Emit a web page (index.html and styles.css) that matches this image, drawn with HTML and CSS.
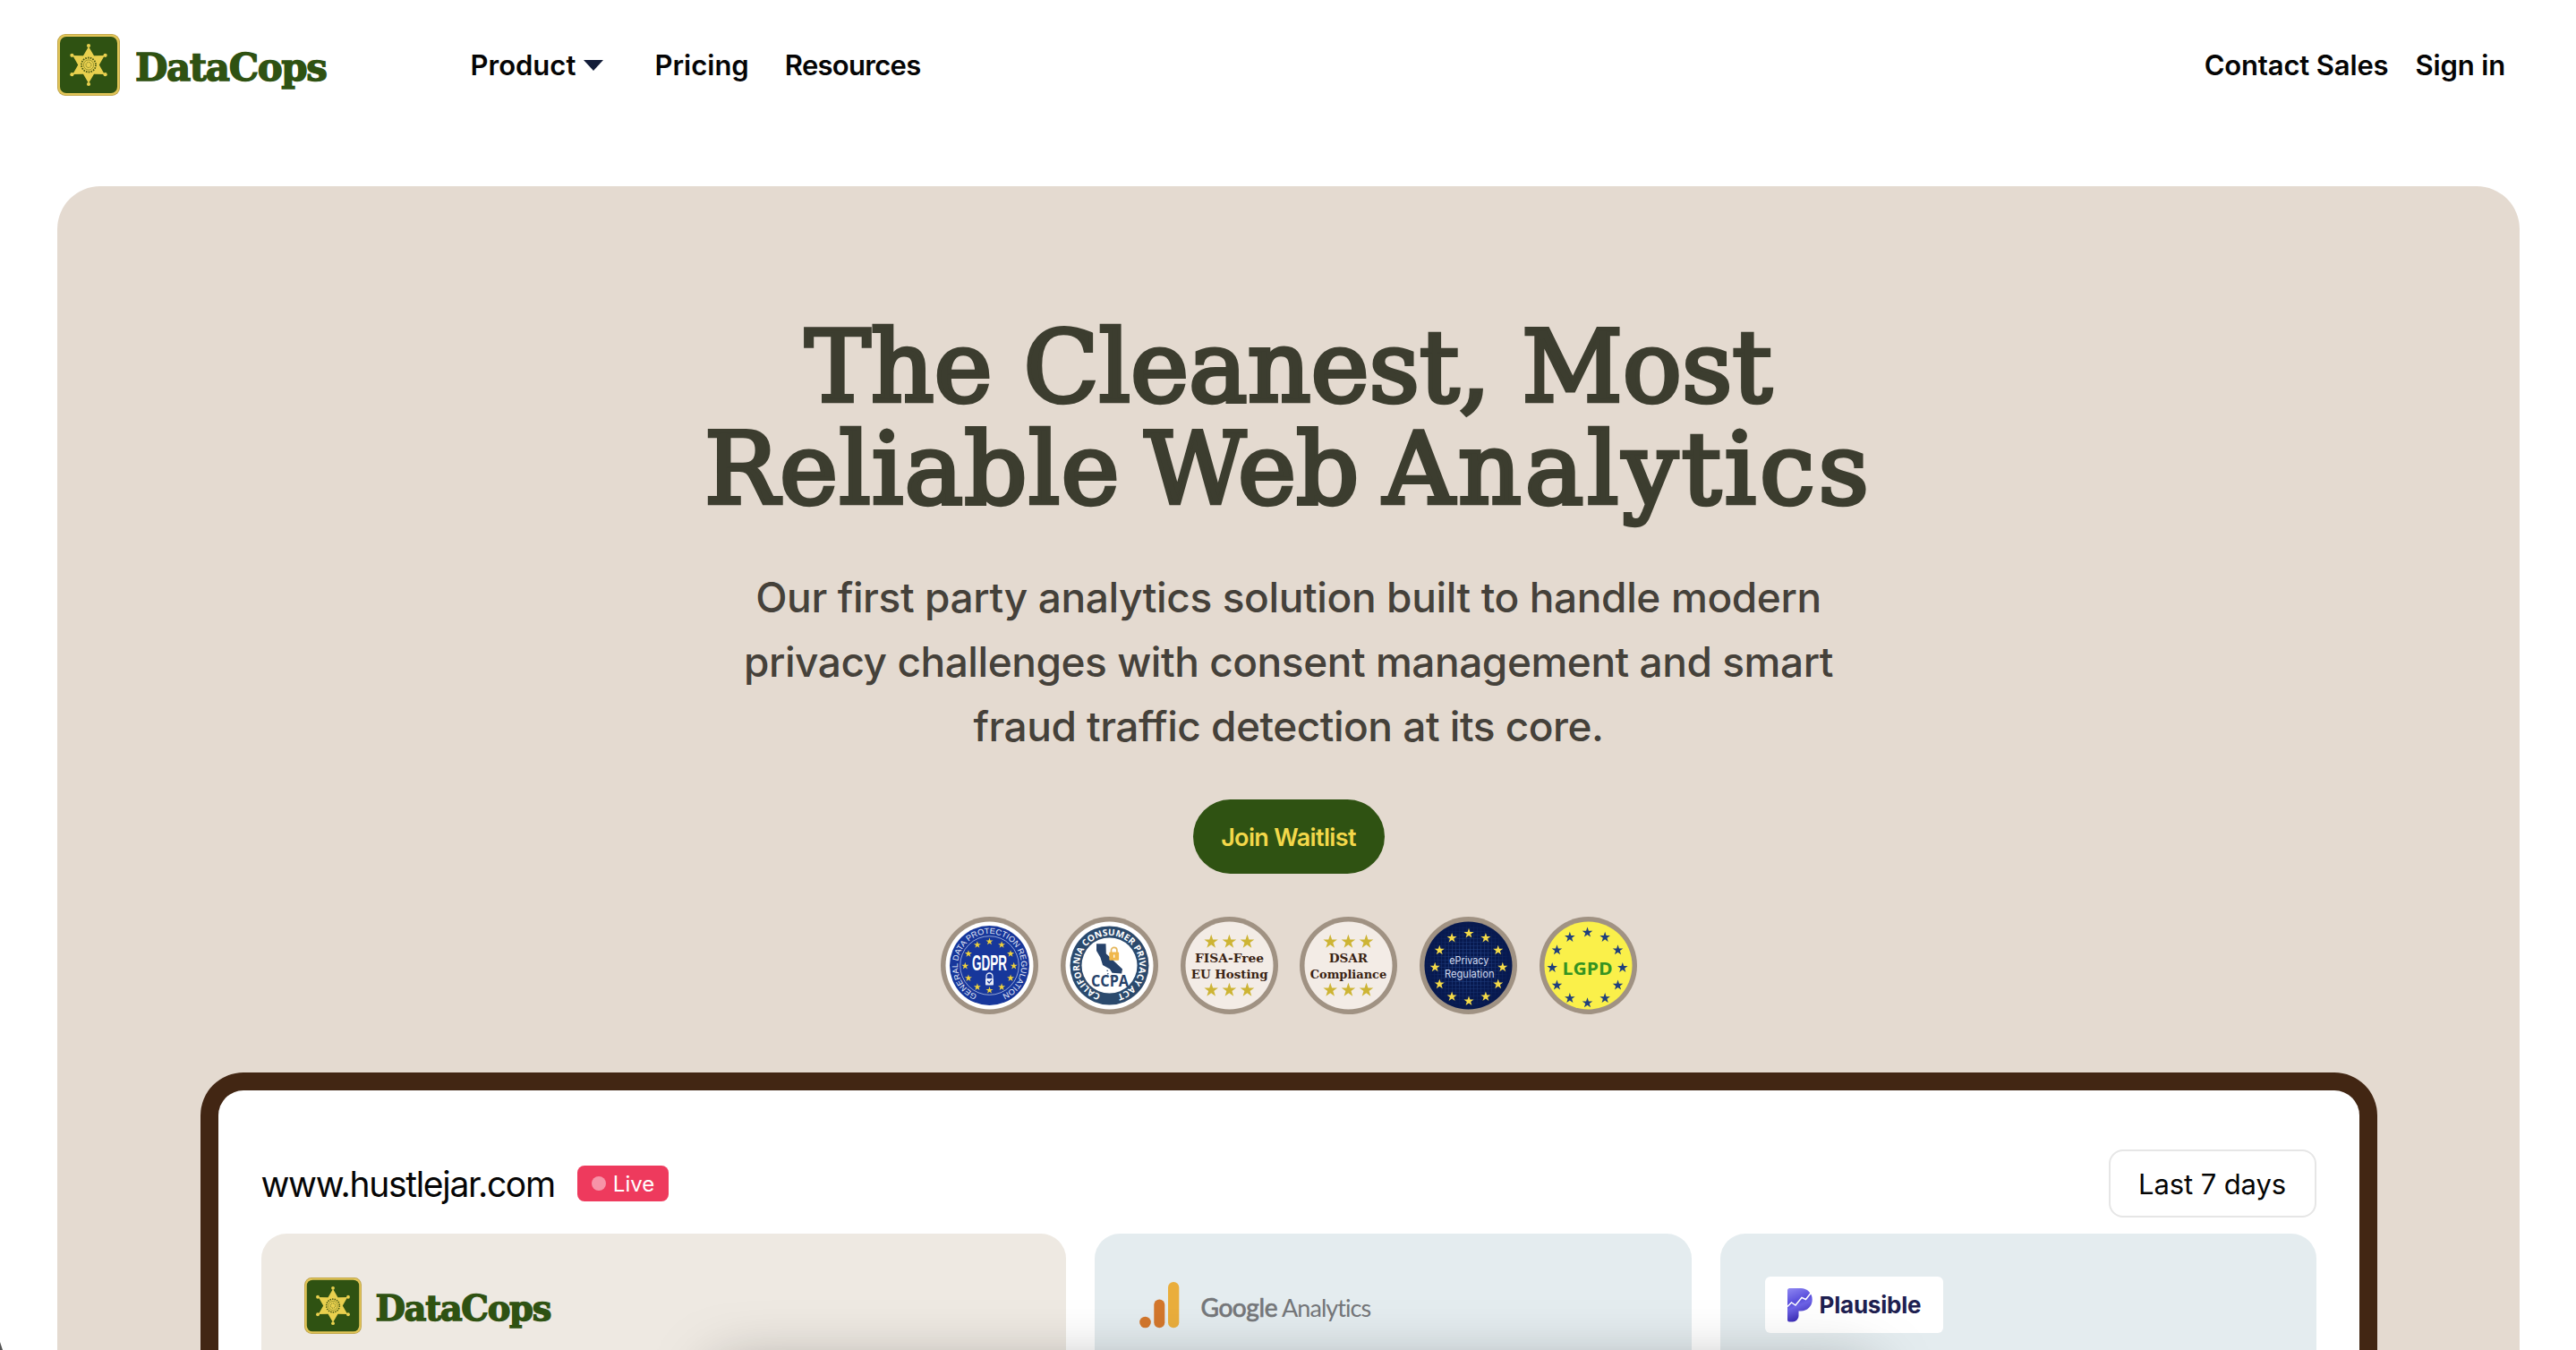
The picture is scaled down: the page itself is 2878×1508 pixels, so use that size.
FILE: index.html
```html
<!DOCTYPE html>
<html lang="en">
<head>
<meta charset="utf-8">
<title>DataCops</title>
<link rel="stylesheet" href="styles.css">
</head>
<body>
<svg class="defs" width="0" height="0" aria-hidden="true">
  <defs>
    <symbol id="sheriff" viewBox="0 0 70 69">
      <rect width="70" height="69" rx="9" fill="#b99f45"/>
      <rect x=".8" y=".8" width="68.4" height="67.4" rx="8.4" fill="#e2c558"/>
      <rect x="3" y="3" width="64" height="63" rx="7" fill="#2f5212"/>
      <g fill="#e9d04e">
        <path d="M35 14l6 10.3 11.8-.2-6 10.4 6 10.4-11.8-.2L35 55l-6-10.3-11.8.2 6-10.4-6-10.4 11.8.2z"/>
        <circle cx="35" cy="13" r="2.1"/><circle cx="53.6" cy="23.8" r="2.1"/><circle cx="53.6" cy="45.2" r="2.1"/>
        <circle cx="35" cy="56" r="2.1"/><circle cx="16.4" cy="45.2" r="2.1"/><circle cx="16.4" cy="23.8" r="2.1"/>
      </g>
      <g fill="none" stroke="#4a5a14">
        <circle cx="35" cy="34.5" r="8" stroke-width="1.8" stroke-dasharray="1.6 1.2"/>
        <circle cx="35" cy="34.5" r="5.6" stroke-width=".5"/>
        <circle cx="35" cy="34.5" r="3" stroke-width=".8" stroke-dasharray="1.4 .9"/>
      </g>
    </symbol>
    <path id="star" d="M0-15.5L3.6-4.8 14.7-4.8 5.8 1.9 9.1 12.5 0 6-9.1 12.5-5.8 1.9-14.7-4.8-3.6-4.8z"/>
    <g id="stars12">
      <use href="#star" y="-100"/><use href="#star" x="50" y="-86.6"/><use href="#star" x="86.6" y="-50"/>
      <use href="#star" x="100"/><use href="#star" x="86.6" y="50"/><use href="#star" x="50" y="86.6"/>
      <use href="#star" y="100"/><use href="#star" x="-50" y="86.6"/><use href="#star" x="-86.6" y="50"/>
      <use href="#star" x="-100"/><use href="#star" x="-86.6" y="-50"/><use href="#star" x="-50" y="-86.6"/>
    </g>
    <g id="stars6" fill="#cdb434">
      <use href="#star" transform="translate(34.2 28) scale(.53)"/><use href="#star" transform="translate(54.4 28) scale(.53)"/><use href="#star" transform="translate(74.5 28) scale(.53)"/>
      <use href="#star" transform="translate(34.2 82) scale(.53)"/><use href="#star" transform="translate(54.4 82) scale(.53)"/><use href="#star" transform="translate(74.5 82) scale(.53)"/>
    </g>
    <path id="arcGdpr" d="M54.5 90a35.500 35.500 0 1 1 .01 0"/>
    <path id="arcCcpa" d="M54.5 88a33.5 33.5 0 1 1 .01 0"/>
    <pattern id="grid" width="4" height="4" patternUnits="userSpaceOnUse"><path d="M0 0h4M0 0v4" stroke="#234487" stroke-width="1.1"/></pattern>
    <radialGradient id="gridFade"><stop offset=".4" stop-color="#fff"/><stop offset="1" stop-color="#000"/></radialGradient>
    <mask id="gridMask"><circle cx="54.5" cy="54.5" r="49" fill="url(#gridFade)"/></mask>
    <linearGradient id="plaus" x1="0" y1="0" x2=".3" y2="1"><stop offset="0" stop-color="#8f88f2"/><stop offset=".45" stop-color="#5a4fdc"/><stop offset=".6" stop-color="#6d63e6"/><stop offset="1" stop-color="#3a2bb4"/></linearGradient>
  </defs>
</svg>

<header class="header">
  <a class="brand"><svg class="brand-mark"><use href="#sheriff"/></svg><span class="brand-name">DataCops</span></a>
  <nav class="nav">
    <a class="nav-product">Product <span class="caret"></span></a>
    <a>Pricing</a>
    <a class="nav-resources">Resources</a>
  </nav>
  <nav class="account"><a>Contact Sales</a><a>Sign in</a></nav>
</header>

<main class="hero">
  <h1>The Cleanest, Most<br><span class="h-two"><span class="w-reliable">Reliable</span> Web <span class="w-analytics">Analytics</span></span></h1>
  <p class="lead"><span class="l-one">Our first party analytics solution built to handle modern</span><br><span class="l-two">privacy challenges with consent management and smart</span><br><span class="l-three">fraud traffic detection at its core.</span></p>
  <a class="cta">Join Waitlist</a>

  <div class="badges">
    <svg viewBox="0 0 109 109">
      <circle cx="54.5" cy="54.5" r="54.5" fill="#a09283"/><circle cx="54.5" cy="54.5" r="49" fill="#fff"/>
      <circle cx="54.5" cy="54.5" r="44.5" fill="#17379b"/><circle cx="54.5" cy="54.5" r="32.8" fill="none" stroke="#c9d2ee" stroke-width=".7"/>
      <text class="ring-gdpr"><textPath href="#arcGdpr" startOffset="14" textLength="194" lengthAdjust="spacingAndGlyphs">GENERAL DATA PROTECTION REGULATION</textPath></text>
      <use href="#stars12" transform="translate(54.5 55) scale(.272)" fill="#f0d23c"/>
      <text class="gdpr" x="35" y="60" textLength="39" lengthAdjust="spacingAndGlyphs">GDPR</text>
      <path d="M51 69v-2.500a3.500 3.500 0 0 1 7 0V69" fill="none" stroke="#e8ecf8" stroke-width="1.300"/><rect x="50" y="69" width="9" height="7.500" rx=".8" fill="#e8ecf8"/><path d="M52.300 72l1.800 2 3-3.300" fill="none" stroke="#17379b" stroke-width="1.200"/>
    </svg>
    <svg viewBox="0 0 109 109">
      <circle cx="54.5" cy="54.5" r="54.5" fill="#a09283"/><circle cx="54.5" cy="54.5" r="49" fill="#fff"/>
      <circle cx="54.5" cy="54.5" r="44" fill="#2b4a6d"/><circle cx="54.5" cy="54.5" r="31" fill="#fff"/>
      <text class="ring-ccpa"><textPath href="#arcCcpa" startOffset="10" textLength="191" lengthAdjust="spacingAndGlyphs">CALIFORNIA CONSUMER PRIVACY ACT</textPath></text>
      <path d="M40 30.300h10.500l.3 11L69 58.500l-.8 5-10.700-.8-2.500-4.200-8-4.500-2.600-8.500L40 38z" fill="#26426a"/>
      <path d="M51.500 60l1.500.5M52 64l1.500-.5M55.500 66.500l1 .6" stroke="#26426a" stroke-width="1.300"/>
      <path d="M56.500 40v-2.500a3.200 3.200 0 0 1 6.400 0V40" fill="none" stroke="#e5b75c" stroke-width="1.700"/><rect x="54.300" y="39.500" width="10.800" height="9.300" rx="1" fill="#f0b84c"/><path d="M59.700 42.500v3.300" stroke="#fff" stroke-width="1.400"/>
      <text class="ccpa" x="34" y="77.500" textLength="42" lengthAdjust="spacingAndGlyphs">CCPA</text>
    </svg>
    <svg viewBox="0 0 109 109">
      <circle cx="54.5" cy="54.5" r="54.5" fill="#a09283"/><circle cx="54.5" cy="54.5" r="49" fill="#f3ece6"/>
      <use href="#stars6"/>
      <text class="slab" x="16" y="50.700" textLength="77" lengthAdjust="spacingAndGlyphs">FISA-Free</text>
      <text class="slab" x="11.700" y="68.700" textLength="86" lengthAdjust="spacingAndGlyphs">EU Hosting</text>
    </svg>
    <svg viewBox="0 0 109 109">
      <circle cx="54.5" cy="54.5" r="54.5" fill="#a09283"/><circle cx="54.5" cy="54.5" r="49" fill="#f3ece6"/>
      <use href="#stars6"/>
      <text class="slab" x="32.700" y="50.700" textLength="43.500" lengthAdjust="spacingAndGlyphs">DSAR</text>
      <text class="slab" x="11.700" y="68.700" textLength="85.500" lengthAdjust="spacingAndGlyphs">Compliance</text>
    </svg>
    <svg viewBox="0 0 109 109">
      <circle cx="54.5" cy="54.5" r="54.5" fill="#a09283"/><circle cx="54.5" cy="54.5" r="49" fill="#07194f"/>
      <circle cx="54.5" cy="54.5" r="49" fill="url(#grid)" mask="url(#gridMask)"/>
      <use href="#stars12" transform="translate(55 56.500) scale(.378)" fill="#f4da48"/>
      <text class="eprivacy" x="33.300" y="53.300" textLength="44" lengthAdjust="spacingAndGlyphs">ePrivacy</text>
      <text class="eprivacy" x="28" y="67.700" textLength="55.500" lengthAdjust="spacingAndGlyphs">Regulation</text>
    </svg>
    <svg viewBox="0 0 109 109">
      <circle cx="54.5" cy="54.5" r="54.5" fill="#a09283"/><circle cx="54.5" cy="54.5" r="49" fill="#faf04a"/>
      <use href="#stars12" transform="translate(53.500 57) scale(.393)" fill="#1f3f7c"/>
      <text class="lgpd" x="25.500" y="65" textLength="56" lengthAdjust="spacingAndGlyphs">LGPD</text>
    </svg>
  </div>

  <section class="board">
    <div class="board-top">
      <span class="site">www.hustlejar.com</span>
      <span class="live"><i class="dot"></i>Live</span>
      <span class="range">Last 7 days</span>
    </div>
    <div class="cards">
      <article class="card own">
        <div class="brand brand-small"><svg class="brand-mark"><use href="#sheriff"/></svg><span class="brand-name">DataCops</span></div>
      </article>
      <article class="card">
        <div class="ga">
          <svg width="45" height="52" viewBox="0 0 45 52"><circle cx="6.500" cy="45" r="6.300" fill="#d3772c"/><rect x="16.300" y="19.500" width="12" height="31.800" rx="6" fill="#d3772c"/><rect x="32" y="0" width="12.300" height="51.300" rx="6.100" fill="#eaae3c"/></svg>
          <span class="ga-text"><span class="ga-bold">Google</span><span class="ga-light">Analytics</span></span>
        </div>
      </article>
      <article class="card">
        <div class="plausible">
          <svg width="28" height="38" viewBox="0 0 28 38"><path d="M0 2.500A2.500 2.500 0 0 1 2.500 0H15a12.500 12.500 0 0 1 0 25.500h-2.500V31a6.500 6.500 0 0 1-6.500 6.500H2A2 2 0 0 1 0 35.500z" fill="url(#plaus)"/><path d="M0 20.500l4.500-4.500 4.500 3 7-8.500 4.500 2L28 3" fill="none" stroke="#fff" stroke-width="1.500"/></svg>
          <span>Plausible</span>
        </div>
      </article>
    </div>
  </section>
</main>
<div class="dock"><div class="dock-shadow"></div></div>
<div class="corner"></div>
</body>
</html>
```
FILE: styles.css
```css
* { box-sizing: border-box; }
html, body { height: 1508px; overflow: hidden; }
body { margin: 0; padding-top: 38px; position: relative; background: #fff; color: #050505; font-family: Inter, sans-serif; }
.defs { position: absolute; }

.header { display: flex; align-items: center; height: 69px; margin: 0 79px 101px 64px; font-size: 31px; font-weight: 600; line-height: 40px; white-space: nowrap; }
.brand { display: flex; align-items: center; gap: 17px; }
.brand-mark { width: 70px; height: 69px; flex: none; }
.brand-name { padding-top: 7px; color: #2f5212; font: 700 42px/50px "DejaVu Serif", serif; letter-spacing: -1.4px; -webkit-text-stroke: 1.4px #2f5212; }
.nav { display: flex; align-items: center; margin-left: 161px; }
.nav-product { display: flex; align-items: center; gap: 9px; width: 206px; }
.caret { border: 11px solid transparent; border-top: 12px solid #121c38; border-bottom: 0; }
.nav-resources { margin-left: 40px; letter-spacing: -.7px; }
.account { display: flex; gap: 30px; margin-left: auto; letter-spacing: -.15px; }

.hero { display: flex; flex-direction: column; align-items: center; height: 1300px; margin: 0 63px 0 64px; padding-top: 145px; overflow: hidden; background: #e4dad0; border-radius: 48px 48px 0 0; text-align: center; white-space: nowrap; }
.hero > * { flex-shrink: 0; }
h1 { margin: 0; color: #3c3d2f; font: 400 110px/114px "DejaVu Serif", serif; -webkit-text-stroke: 4.5px #3c3d2f; }
.h-two { word-spacing: -8px; }
.w-reliable { letter-spacing: 1.3px; }
.w-analytics { letter-spacing: 4px; }
.lead { margin: 50px 0 0; color: #45413a; font-size: 46px; font-weight: 500; line-height: 72px; }
.l-one { letter-spacing: -.38px; }
.l-two { letter-spacing: -.46px; }
.l-three { letter-spacing: -.5px; }
.cta { display: flex; align-items: center; justify-content: center; width: 214px; height: 83px; margin-top: 46px; padding-top: 1px; border-radius: 42px; background: #2f5212; color: #f3d84a; font-size: 27px; font-weight: 600; letter-spacing: -.65px; }

.badges { display: flex; gap: 24.8px; margin-top: 48px; padding-left: 1px; }
.badges svg { width: 109px; height: 109px; }
.ring-gdpr { font: 400 9px "Liberation Sans", sans-serif; fill: #e8ecf8; }
.ring-ccpa { font: 700 10px "Open Sans", sans-serif; fill: #fff; }
.gdpr { font: 700 23.5px "Liberation Sans", sans-serif; fill: #fff; }
.ccpa { font: 700 17px "Open Sans", sans-serif; fill: #26426a; }
.slab { font: 700 13.5px "DejaVu Serif", serif; fill: #3a2313; }
.eprivacy { font: 400 11.5px Inter, sans-serif; fill: #d3dbee; }
.lgpd { font: 700 20px "Open Sans", sans-serif; fill: #359321; }

.board { width: 2432px; height: 310px; margin-top: 65px; padding: 66px 48px 0; overflow: hidden; border: 20px solid #422613; border-bottom: 0; border-radius: 48px 48px 0 0; background: #fff; text-align: left; }
.board-top { display: flex; align-items: center; height: 76px; }
.site { font-size: 39px; letter-spacing: -1.3px; }
.live { display: flex; align-items: center; gap: 8px; width: 102px; height: 40px; margin-left: 25px; padding-left: 16px; border-radius: 8px; background: #ee3a5d; color: #fff; font-size: 24px; }
.dot { width: 16px; height: 16px; border-radius: 50%; background: #f793a8; }
.range { display: flex; align-items: center; justify-content: center; width: 232px; height: 76px; margin-left: auto; border: 2px solid #e6e6e6; border-radius: 16px; font-size: 31px; letter-spacing: -.1px; }
.cards { display: grid; grid-template-columns: 899px 667px 666px; gap: 32px; margin-top: 18px; }
.card { height: 130px; padding: 48px; border-radius: 28px 28px 0 0; background: #e4ecef; }
.card.own { background: #eee9e2; }
.brand-small { gap: 16px; margin-top: 1px; }
.brand-small .brand-mark { width: 64px; height: 63px; }
.brand-small .brand-name { font-size: 38.5px; letter-spacing: -1.3px; }
.ga { display: flex; align-items: center; gap: 24px; margin: 6px 0 0 2px; color: #75777a; font-family: Lato, sans-serif; }
.ga-text { display: flex; align-items: baseline; gap: 5px; padding-top: 4px; }
.ga-bold { font-size: 28px; letter-spacing: -.4px; -webkit-text-stroke: .7px #75777a; }
.ga-light { font-size: 27px; letter-spacing: -.95px; }
.plausible { display: flex; align-items: center; gap: 8px; width: 199px; height: 63px; margin-left: 2px; padding-left: 25px; border-radius: 6px; background: #fff; color: #1e2050; font-size: 26px; font-weight: 700; letter-spacing: -.2px; }

.dock { position: absolute; left: 0; right: 0; bottom: 0; height: 120px; overflow: hidden; }
.dock-shadow { width: 1290px; height: 200px; margin: 142px 0 0 800px; box-shadow: 0 0 70px rgba(0, 0, 0, .36); }
.corner { position: absolute; left: 0; bottom: 0; width: 3px; height: 9px; background: #555; clip-path: polygon(0 0, 100% 100%, 0 100%); }
```
